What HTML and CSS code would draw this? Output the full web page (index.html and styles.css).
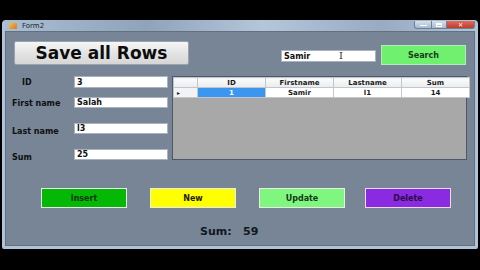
FILE: index.html
```html
<!DOCTYPE html>
<html lang="en">
<head>
  <meta charset="UTF-8" />
  <title>Form2</title>
  <link rel="stylesheet" href="styles.css">
</head>
<body>
  <div class="window">
    <div class="titlebar">
      <span class="app-icon"></span>
      <span class="title">Form2</span>
      <div class="controls">
        <span class="ctl ctl-min"><i></i></span>
        <span class="ctl ctl-max"><i></i></span>
        <span class="ctl ctl-close">&#x2715;</span>
      </div>
    </div>

    <div class="client">
      <div class="top-row">
        <button class="save-btn">Save all Rows</button>
        <div class="search-box">
          <input class="txt search-txt" type="text" value="Samir">
          <span class="ibeam">I</span>
        </div>
        <button class="search-btn">Search</button>
      </div>

      <div class="mid-row">
        <div class="form">
          <div class="field">
            <label class="lbl lbl-id">ID</label>
            <input class="txt" type="text" value="3">
          </div>
          <div class="field field-first">
            <label class="lbl">First name</label>
            <input class="txt" type="text" value="Salah">
          </div>
          <div class="field field-wide">
            <label class="lbl">Last name</label>
            <input class="txt" type="text" value="l3">
          </div>
          <div class="field field-wide">
            <label class="lbl">Sum</label>
            <input class="txt" type="text" value="25">
          </div>
        </div>

        <div class="grid">
          <table>
            <thead>
              <tr>
                <th class="rowhead"></th>
                <th>ID</th>
                <th>Firstname</th>
                <th>Lastname</th>
                <th>Sum</th>
              </tr>
            </thead>
            <tbody>
              <tr>
                <td class="rowhead">&#9656;</td>
                <td class="selected">1</td>
                <td>Samir</td>
                <td>l1</td>
                <td>14</td>
              </tr>
            </tbody>
          </table>
        </div>
      </div>

      <div class="actions">
        <button class="act act-insert">Insert</button>
        <button class="act act-new">New</button>
        <button class="act act-update">Update</button>
        <button class="act act-delete">Delete</button>
      </div>

      <div class="total">Sum:&nbsp;&nbsp; 59</div>
    </div>
  </div>
</body>
</html>
```

FILE: styles.css
```css
body {
  margin: 0;
  background: #000;
  font-family: "DejaVu Sans", Verdana, sans-serif;
}
.window {
  margin: 20px 0 0 2px;
  width: 476px;
  height: 229px;
  box-sizing: border-box;
  padding: 0 3px 3px;
  background: #aec2d8;
  border-radius: 4px 4px 2px 2px;
  display: flex;
  flex-direction: column;
}
.titlebar {
  height: 11px;
  display: flex;
  align-items: center;
  background: linear-gradient(90deg, #a9bdd3 0%, #8fa3b9 30%, #b4c6da 55%, #98abc1 80%, #b0c3d8 100%);
}
.app-icon {
  width: 8px;
  height: 6px;
  margin-left: 4px;
  background: linear-gradient(135deg, #f2c53c, #d9762a);
  border-radius: 1px;
}
.title {
  font-size: 7px;
  color: #1b2633;
  margin-left: 5px;
}
.controls {
  margin-left: auto;
  display: flex;
  height: 9px;
  align-self: flex-start;
  margin-top: 1px;
}
.ctl {
  display: flex;
  align-items: center;
  justify-content: center;
  height: 8px;
  border: 1px solid #6d7f94;
  border-top: none;
  box-sizing: border-box;
  background: linear-gradient(#d5e0ec, #a8b9cc);
}
.ctl-min { width: 18px; border-radius: 0 0 0 3px; }
.ctl-min i { width: 7px; height: 1px; background: #fff; margin-top: 2px; }
.ctl-max { width: 15px; border-left: none; }
.ctl-max i { width: 6px; height: 4px; border: 1px solid #fff; border-top-width: 2px; box-sizing: border-box; }
.ctl-close {
  width: 28px;
  border-left: none;
  border-radius: 0 0 3px 0;
  background: linear-gradient(#df6d5c, #c23a28);
  color: #fff;
  font-size: 6px;
  font-weight: bold;
}
.client {
  flex: 1;
  background: #778596;
  border: 1px solid #62707f;
  padding: 9px 0 0 6px;
  display: flex;
  flex-direction: column;
}
.top-row {
  display: flex;
  align-items: flex-start;
}
.save-btn {
  margin-left: 2px;
  width: 175px;
  height: 24px;
  border: 1px solid #9aa3ad;
  border-radius: 2px;
  background: linear-gradient(#f6f6f6, #e4e4e4 50%, #d6d6d6);
  font-family: "DejaVu Sans", Verdana, sans-serif;
  font-weight: bold;
  font-size: 17px;
  color: #0d0d0d;
  padding: 0;
}
.search-box {
  position: relative;
  margin: 9px 0 0 92px;
}
.txt {
  display: block;
  width: 94px;
  height: 12px;
  box-sizing: border-box;
  border: 1px solid #a7b3c0;
  background: #fff;
  padding: 0 2px;
  font-family: "DejaVu Sans", Verdana, sans-serif;
  font-weight: bold;
  font-size: 8px;
  color: #111;
  outline: none;
}
.search-txt {
  width: 95px;
}
.ibeam {
  position: absolute;
  left: 58px;
  top: 0;
  font-family: "DejaVu Serif", serif;
  font-size: 10px;
  line-height: 11px;
  color: #333;
}
.search-btn {
  margin: 4px 0 0 5px;
  width: 85px;
  height: 20px;
  border: 1px solid #b9e8b9;
  background: #6ff06f;
  font-family: "DejaVu Sans", Verdana, sans-serif;
  font-weight: bold;
  font-size: 8px;
  color: #173d17;
  padding: 0;
}
.mid-row {
  display: flex;
  margin-top: 11px;
}
.form {
  width: 156px;
}
.field {
  display: flex;
  align-items: center;
  height: 12px;
}
.field-first { margin-top: 9px; height: 11px; }
.field-wide { margin-top: 15px; height: 11px; }
.lbl {
  width: 62px;
  font-size: 8px;
  font-weight: bold;
  color: #101010;
  white-space: nowrap;
  position: relative;
  top: 1px;
}
.field-wide .lbl {
  top: 3px;
}
.lbl-id {
  padding-left: 10px;
  box-sizing: border-box;
  top: 0;
}
.field .txt {
  height: 100%;
}
.grid {
  margin-left: 4px;
  width: 295px;
  height: 84px;
  box-sizing: border-box;
  border: 1px solid #4c5866;
  background: #a8a8a8;
}
table {
  border-collapse: collapse;
  table-layout: fixed;
  width: 293px;
  font-size: 7px;
  font-weight: bold;
  color: #1a1a1a;
}
th, td {
  height: 9px;
  padding: 0;
  text-align: center;
  border: 1px solid #c2c7cd;
  line-height: 8px;
  white-space: nowrap;
  overflow: hidden;
}
th {
  background: linear-gradient(#fbfbfb, #e9ecef);
  width: 67px;
}
th.rowhead { width: 23px; }
td {
  background: #fff;
}
td.rowhead {
  background: #f1f3f5;
  text-align: left;
  padding-left: 3px;
  font-size: 6px;
}
td.selected {
  background: #3b96f0;
  color: #fff;
}
.actions {
  display: flex;
  gap: 23px;
  margin: 28px 0 0 29px;
}
.act {
  width: 86px;
  height: 20px;
  border: 1px solid #e6eee6;
  padding: 0;
  font-family: "DejaVu Sans", Verdana, sans-serif;
  font-weight: bold;
  font-size: 8px;
}
.act-insert { background: #06b806; color: #0c3a0c; }
.act-new { background: #ffff00; color: #1c1c00; }
.act-update { background: #7ff77f; color: #17381a; }
.act-delete { background: #8a2be2; color: #2a0a45; border-color: #f0d8f6; margin-left: -3px; }
.total {
  margin: 17px 0 0 188px;
  font-size: 11px;
  font-weight: bold;
  color: #101820;
  line-height: 14px;
}
```
